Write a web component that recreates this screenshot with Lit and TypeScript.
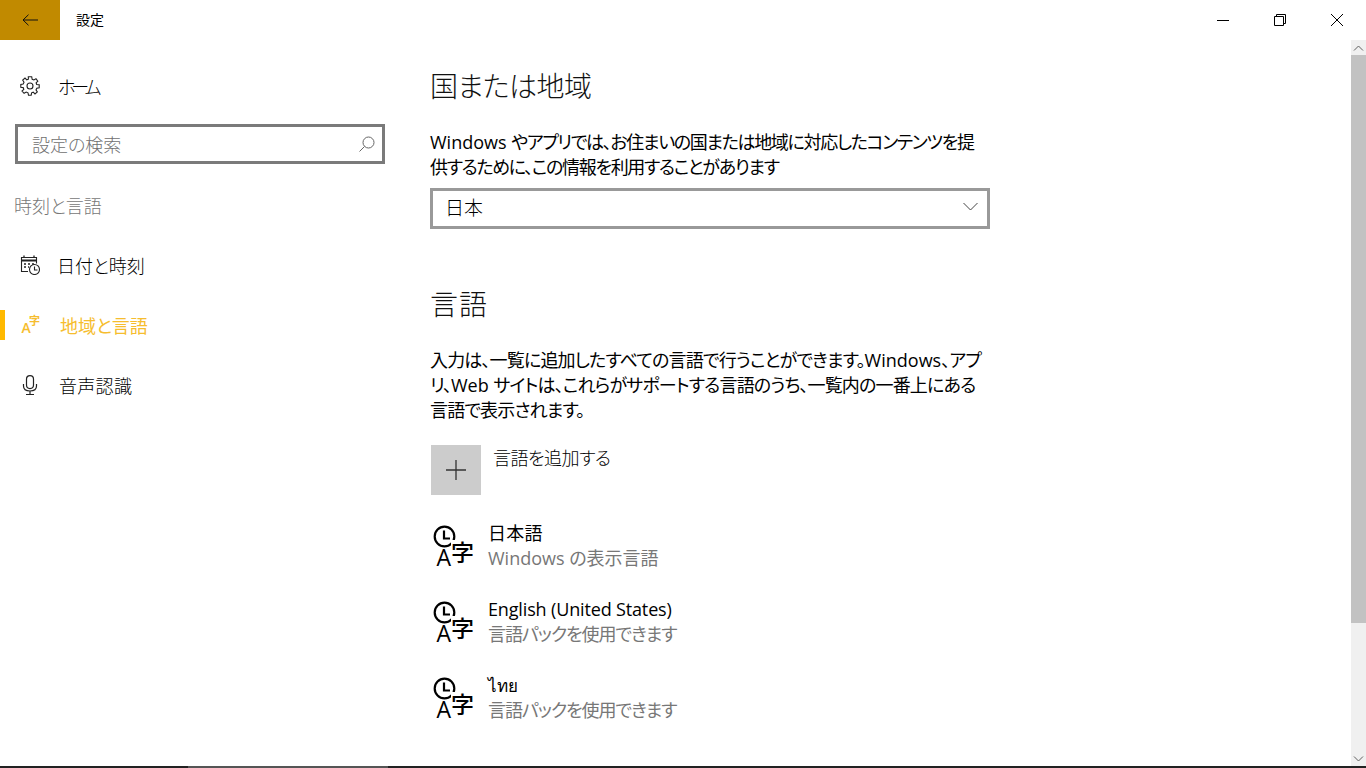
import { LitElement, html, css } from "lit";
import { customElement } from "lit/decorators.js";

const langIcon = html`<svg class="lang-icon" width="42" height="46" viewBox="0 0 42 46">
  <circle cx="11.500" cy="11.500" r="9.800" fill="none" stroke="#000" stroke-width="2.200"/>
  <path d="M11 5.500V13.500H17" fill="none" stroke="#000" stroke-width="2.200"/>
  <path d="M18 15H42V46H0V23H18Z" fill="#fff"/>
  <text x="3.500" y="41" class="ic-a">A</text>
  <text x="18" y="36" class="ic-j">字</text>
</svg>`;

@customElement("app-root")
export class AppRoot extends LitElement {
  static styles = css`
    :host {
      display: flex;
      flex-direction: column;
      width: 1366px;
      height: 768px;
      overflow: hidden;
      background: #fff;
      color: #000;
      font-family: "Open Sans", "Noto Sans CJK JP", sans-serif;
      font-weight: 400;
      font-feature-settings: "palt";
    }
    .titlebar { display: flex; align-items: center; height: 40px; flex: none; }
    .back { width: 60px; height: 40px; background: #c18a00; display: flex; align-items: center; justify-content: center; }
    .app-title { margin-left: 16px; font-size: 14px; line-height: 38px; height: 40px; font-family: "Noto Sans CJK JP", sans-serif; }
    .win { margin-left: auto; display: flex; padding-right: 1px; }
    .win div { width: 57px; height: 40px; display: flex; align-items: center; justify-content: center; }
    .content { flex: 1; display: flex; min-height: 0; }
    .side { width: 430px; flex: none; padding-top: 26px; box-sizing: border-box; }
    .home { display: flex; align-items: center; height: 40px; padding-left: 20px; font-size: 18px; font-family: "Noto Sans CJK JP", sans-serif; font-weight: 300; }
    .home span { margin-left: 18px; letter-spacing: -4px; }
    .search {
      box-sizing: border-box; width: 370px; height: 40px; margin: 18px 0 0 15px;
      border: 3px solid #7a7a7a; display: flex; align-items: center; justify-content: space-between;
      padding: 0 7px 0 14px; font-size: 18px; color: #6f6f6f;
      font-family: "Noto Sans CJK JP", sans-serif; font-weight: 300;
    }
    .section { margin: 26px 0 0 14px; font-size: 18px; line-height: 30px; color: #777; font-family: "Noto Sans CJK JP", sans-serif; font-weight: 300; }
    .nav { margin-top: 15px; }
    .nav-item {
      display: flex; align-items: center; height: 60px; position: relative; padding-left: 20px;
      font-size: 18px; font-family: "Noto Sans CJK JP", sans-serif; font-weight: 300;
    }
    .nav-item .ico { width: 20px; height: 22px; display: flex; align-items: center; justify-content: center; }
    .nav-item span { margin-left: 17px; }
    .nav-item.active { color: #f6bd2e; font-weight: 400; }
    .nav-item.active span { margin-left: 20px; }
    .nav-item.voice span { margin-left: 19px; letter-spacing: 0.300px; }
    .nav-item.active::before { content: ""; position: absolute; left: 0; top: 15px; width: 5px; height: 30px; background: #ffb900; }
    .main { flex: 1; min-width: 0; padding-top: 24px; font-size: 18px; }
    h1, h2 { margin: 0; font-weight: 300; font-size: 28px; line-height: 42px; font-family: "Noto Sans CJK JP", sans-serif; color: #111; }
    h1 { letter-spacing: -0.500px; }
    h2 { margin-top: 53px; letter-spacing: 1px; }
    p { margin: 0; line-height: 25px; letter-spacing: -0.900px; white-space: nowrap; }
    .lat { letter-spacing: 0; }
    .p1 { margin-top: 24px; letter-spacing: -1.350px; }
    .select {
      box-sizing: border-box; width: 560px; height: 41px; margin-top: 8px; border: 3px solid #999;
      display: flex; align-items: center; justify-content: space-between; padding: 0 9px 4px 12px;
      font-size: 19px; font-family: "Noto Sans CJK JP", sans-serif; font-weight: 300;
    }
    .p2 { margin-top: 24px; letter-spacing: -0.850px; }
    .add { display: flex; margin: 22px 0 0 1px; height: 50px; }
    .plus { width: 50px; height: 50px; background: #ccc; display: flex; align-items: center; justify-content: center; }
    .add span { margin-left: 12px; line-height: 25px; letter-spacing: -0.500px; font-family: "Noto Sans CJK JP", sans-serif; font-weight: 300; }
    .langs { margin-top: 26px; }
    .lang { display: flex; height: 76px; padding-left: 3px; }
    .lang-icon { flex: none; margin-top: 4px; overflow: visible; }
    .lang-text { margin-left: 13px; line-height: 25px; }
    .lang-text .en { letter-spacing: -0.150px; }
    .lang-text .jp { letter-spacing: 0.300px; }
    .lang-text .s { color: #777; }
    .lang-text .tight { letter-spacing: -1.050px; }
    .thai { font-family: "Noto Sans", "DejaVu Sans", sans-serif; font-weight: 300; font-size: 17px; }
    .ic-a { font: 500 23px "Open Sans", sans-serif; fill: #000; }
    .ic-j { font: 500 23px "Noto Sans CJK JP", sans-serif; fill: #000; }
    .ic-sa { font: 600 14px "Open Sans", sans-serif; fill: #f6bd2e; }
    .ic-sj { font: 700 11px "Noto Sans CJK JP", sans-serif; fill: #f6bd2e; }
    .scroll { width: 15px; flex: none; background: #f0f0f0; display: flex; flex-direction: column; }
    .arrow { height: 15px; flex: none; display: flex; align-items: center; justify-content: center; }
    .thumb { height: 568px; flex: none; background: #c2c2c2; }
    .spacer { flex: 1; }
    .taskbar { height: 2px; flex: none; display: flex; background: #222; }
    .taskbar div { margin-left: 188px; width: 200px; background: #555; }
  `;

  render() {
    return html`
      <div class="titlebar">
        <div class="back">
          <svg width="16" height="12" viewBox="0 0 16 12" fill="none" stroke="#111" stroke-width="1">
            <path d="M16 6H1.500M6.500 0.700L1 6L6.500 11.300"/>
          </svg>
        </div>
        <div class="app-title">設定</div>
        <div class="win">
          <div><svg width="12" height="12" viewBox="0 0 12 12" stroke="#000" fill="none"><path d="M0 6.500H12"/></svg></div>
          <div><svg width="12" height="12" viewBox="0 0 12 12" stroke="#000" fill="none"><path d="M0.500 2.500H9.500V11.500H0.500ZM2.500 2.500V0.500H11.500V9.500H9.500"/></svg></div>
          <div><svg width="12" height="12" viewBox="0 0 12 12" stroke="#000" fill="none"><path d="M0 0L12 12M12 0L0 12"/></svg></div>
        </div>
      </div>
      <div class="content">
        <div class="side">
          <div class="home">
            <svg width="20" height="20" viewBox="0 0 20 20" fill="none" stroke="#222" stroke-width="1.100">
              <circle cx="10" cy="10" r="3"/>
              <path d="M8.300 0.800H11.700L12.200 3.300L13.900 4L16 2.700L17.800 5.100L16.100 6.800L16.700 8.500L19.200 8.800V11.700L16.800 12.200L16 13.900L17.300 16L15 18L13.200 16.200L11.600 16.800L11.200 19.200H8.500L8 16.800L6.200 16L4.100 17.300L2 15L3.800 13.300L3.200 11.600L0.800 11.200V8.400L3.200 8L4 6.200L2.700 4.100L5 2L6.800 3.800L8.400 3.200Z"/>
            </svg>
            <span>ホーム</span>
          </div>
          <div class="search">
            <span>設定の検索</span>
            <svg width="16" height="16" viewBox="0 0 16 16" fill="none" stroke="#666" stroke-width="1">
              <circle cx="9.500" cy="6.500" r="5.500"/>
              <path d="M5.500 10.500L0.500 15.500"/>
            </svg>
          </div>
          <div class="section">時刻と言語</div>
          <div class="nav">
            <div class="nav-item">
              <div class="ico">
                <svg width="20" height="20" viewBox="0 0 20 20" fill="none" stroke="#222" stroke-width="1.100">
                  <path d="M8 16.500H1.500V2.500H16.500V8.500"/>
                  <path d="M1.500 5.500H16.500" stroke-width="2"/>
                  <path d="M4 0.500V3M14 0.500V3M4 9H6M8 9H10M12 9H14M4 12H6M8 12H9" stroke-width="1.300"/>
                  <circle cx="14.500" cy="14.500" r="5"/>
                  <path d="M14.500 11.500V15H17.500"/>
                </svg>
              </div>
              <span>日付と時刻</span>
            </div>
            <div class="nav-item active">
              <div class="ico">
                <svg width="20" height="20" viewBox="0 0 20 20" style="overflow:visible">
                  <text x="1.500" y="18" class="ic-sa">A</text>
                  <text x="9" y="10" class="ic-sj">字</text>
                </svg>
              </div>
              <span>地域と言語</span>
            </div>
            <div class="nav-item voice">
              <div class="ico">
                <svg width="16" height="20" viewBox="0 0 16 20" fill="none" stroke="#222" stroke-width="1.200">
                  <rect x="4.500" y="0.600" width="7" height="13" rx="3.500"/>
                  <path d="M1.500 9V11C1.500 14 4 16 8 16C12 16 14.500 14 14.500 11V9M8 16V19.500M4 19.500H12"/>
                </svg>
              </div>
              <span>音声認識</span>
            </div>
          </div>
        </div>
        <div class="main">
          <h1>国または地域</h1>
          <p class="p1"><span class="lat">Windows </span>やアプリでは、お住まいの国または地域に対応したコンテンツを提<br />供するために、この情報を利用することがあります</p>
          <div class="select">
            <span>日本</span>
            <svg width="15" height="9" viewBox="0 0 15 9" fill="none" stroke="#444" stroke-width="1"><path d="M0.500 1L7.500 8L14.500 1"/></svg>
          </div>
          <h2>言語</h2>
          <p class="p2">入力は、一覧に追加したすべての言語で行うことができます。<span class="lat">Windows</span>、アプ<br />リ、<span class="lat">Web </span>サイトは、これらがサポートする言語のうち、一覧内の一番上にある<br />言語で表示されます。</p>
          <div class="add">
            <div class="plus">
              <svg width="20" height="20" viewBox="0 0 20 20" stroke="#333" stroke-width="1.300"><path d="M10 0V20M0 10H20"/></svg>
            </div>
            <span>言語を追加する</span>
          </div>
          <div class="langs">
            <div class="lang">${langIcon}
              <div class="lang-text"><div class="jp">日本語</div><div class="s">Windows の表示言語</div></div>
            </div>
            <div class="lang">${langIcon}
              <div class="lang-text"><div class="en">English (United States)</div><div class="s tight">言語パックを使用できます</div></div>
            </div>
            <div class="lang">${langIcon}
              <div class="lang-text"><div class="thai">ไทย</div><div class="s tight">言語パックを使用できます</div></div>
            </div>
          </div>
        </div>
        <div class="scroll">
          <div class="arrow"><svg width="11" height="6" viewBox="0 0 11 6" fill="none" stroke="#606060"><path d="M1 5.500L5.500 1L10 5.500"/></svg></div>
          <div class="thumb"></div>
          <div class="spacer"></div>
          <div class="arrow"><svg width="11" height="6" viewBox="0 0 11 6" fill="none" stroke="#606060"><path d="M1 0.500L5.500 5L10 0.500"/></svg></div>
        </div>
      </div>
      <div class="taskbar"><div></div></div>
    `;
  }
}
